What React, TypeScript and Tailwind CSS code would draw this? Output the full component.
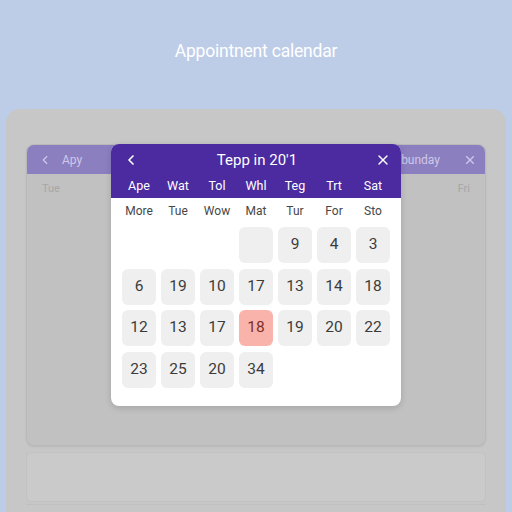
import { ChevronLeft, X } from "lucide-react";

const topNames = ["Ape", "Wat", "Tol", "Whl", "Teg", "Trt", "Sat"];
const subNames = ["More", "Tue", "Wow", "Mat", "Tur", "For", "Sto"];

// null = blank slot, "" = empty tile
const days: (string | null)[] = [
  null, null, null, "", "9", "4", "3",
  "6", "19", "10", "17", "13", "14", "18",
  "12", "13", "17", "18", "19", "20", "22",
  "23", "25", "20", "34",
];

const selectedIndex = 17;

function DayCell({ value, active }: { value: string | null; active: boolean }) {
  if (value === null) return <div className="h-[36px]" />;
  return (
    <div
      className={
        active
          ? "h-[36px] rounded-[6px] bg-[#fab3aa] text-[#7c2f29] flex items-center justify-center text-[15.5px]"
          : "h-[36px] rounded-[6px] bg-[#efefef] text-[#3b3b3b] flex items-center justify-center text-[15.5px]"
      }
    >
      {value}
    </div>
  );
}

function Picker() {
  return (
    <div className="absolute left-[84px] top-[-1px] w-[290px] rounded-[8px] bg-white shadow-[0_2px_6px_rgba(0,0,0,0.15)] overflow-hidden">
      <div className="bg-[#4b2b9f] text-white">
        <div className="h-[30px] pt-[2px] flex items-center justify-between pl-[12px] pr-[10px]">
          <ChevronLeft size={16} strokeWidth={2.5} />
          <span className="text-[15px]">Tepp in 20'1</span>
          <X size={16} strokeWidth={2} />
        </div>
        <div className="grid grid-cols-[repeat(7,34px)] gap-x-[5px] pl-[11px] h-[24px] pt-[1px] items-center text-[12.5px] text-center">
          {topNames.map((n, i) => (
            <span key={i}>{n}</span>
          ))}
        </div>
      </div>
      <div className="grid grid-cols-[repeat(7,34px)] gap-x-[5px] pl-[11px] h-[25px] items-center text-[12px] text-center text-[#474747]">
        {subNames.map((n, i) => (
          <span key={i}>{n}</span>
        ))}
      </div>
      <div className="grid grid-cols-[repeat(7,34px)] gap-x-[5px] gap-y-[5.5px] pl-[11px] pt-[4px] pb-[18px]">
        {days.map((d, i) => (
          <DayCell key={i} value={d} active={i === selectedIndex} />
        ))}
      </div>
    </div>
  );
}

export default function App() {
  return (
    <div className="w-[512px] h-[512px] overflow-hidden bg-[#bdcde8] flex flex-col font-['Roboto',sans-serif]">
      <div className="h-[109px] flex items-center justify-center pb-[6px]">
        <h1 className="text-white text-[17.5px] tracking-[-0.2px]">Appointnent calendar</h1>
      </div>
      <div className="flex-1 mx-[6px] rounded-t-[14px] bg-[#c7c7c7] px-[20px] pt-[35px] flex flex-col">
        <div className="relative h-[302px] rounded-[8px] bg-[#c1c1c1] border border-[#b9b9b9] shadow-[0_1px_2px_rgba(0,0,0,0.08)]">
          <div className="h-[29px] rounded-t-[7px] bg-[#8b7fc0] flex items-center justify-between pl-[11px] pr-[8px] text-[#cfc8ea] text-[12px]">
            <div className="flex items-center gap-[10px]">
              <ChevronLeft size={14} strokeWidth={2} />
              <span>Apy</span>
            </div>
            <div className="flex items-center gap-[23px]">
              <span>bunday</span>
              <X size={14} strokeWidth={2} />
            </div>
          </div>
          <div className="flex justify-between px-[15px] pt-[7px] text-[11px] text-[#a7a7a7]">
            <span>Tue</span>
            <span>Fri</span>
          </div>
          <Picker />
        </div>
        <div className="mt-[6px] h-[50px] rounded-[4px] bg-[#cacaca] border border-[#c2c2c2]" />
        <div className="mt-[2px] flex-1 border-t border-[#c0c0c0]" />
      </div>
    </div>
  );
}
